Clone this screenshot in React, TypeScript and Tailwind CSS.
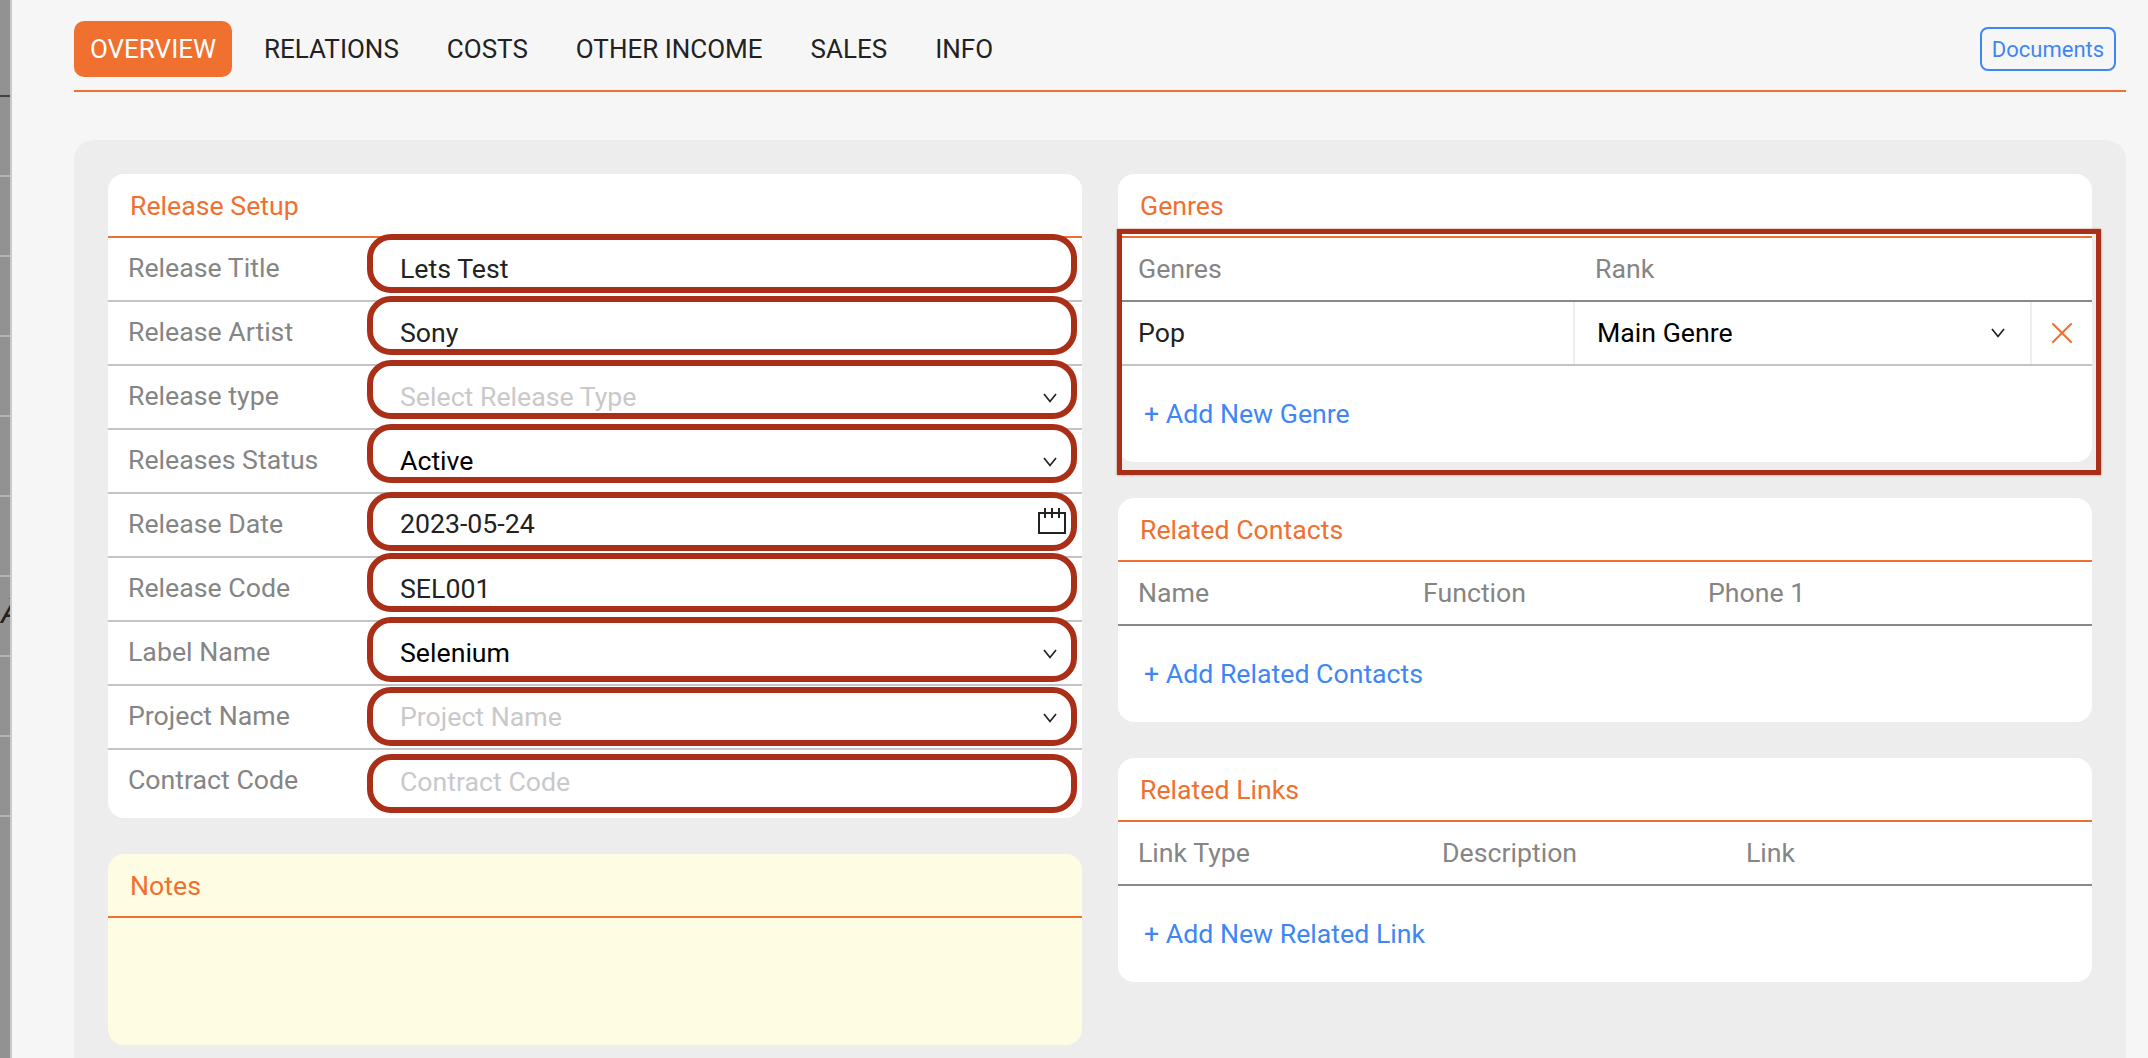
import React from 'react';
import { X } from 'lucide-react';

const tabs = ['RELATIONS', 'COSTS', 'OTHER INCOME', 'SALES', 'INFO'];

interface SetupRow {
  label: string;
  value?: string;
  placeholder?: string;
  ring: string;
  text: string;
  select?: boolean;
  date?: boolean;
}

// the red outlines are hand-drawn annotations, each sits a bit differently on its row
const setupRows: SetupRow[] = [
  { label: 'Release Title', value: 'Lets Test', ring: 'top-[-4px] h-[59px]', text: 'text-[#222] pt-[1px]' },
  { label: 'Release Artist', value: 'Sony', ring: 'top-[-6px] h-[59px]', text: 'text-[#222] pt-[1px]' },
  { label: 'Release type', placeholder: 'Select Release Type', ring: 'top-[-6px] h-[59px]', text: 'text-[#c9c9c9] pt-[1px]', select: true },
  { label: 'Releases Status', value: 'Active', ring: 'top-[-6px] h-[59px]', text: 'text-black pt-[1px]', select: true },
  { label: 'Release Date', value: '2023-05-24', ring: 'top-[-2px] h-[59px]', text: 'text-[#222] pb-[1px]', date: true },
  { label: 'Release Code', value: 'SEL001', ring: 'top-[-5px] h-[59px]', text: 'text-[#222] pt-[1px]' },
  { label: 'Label Name', value: 'Selenium', ring: 'top-[-5px] h-[65px]', text: 'text-black pt-[1px]', select: true },
  { label: 'Project Name', placeholder: 'Project Name', ring: 'top-[1px] h-[59px]', text: 'text-[#c9c9c9] pt-[1px]', select: true },
  { label: 'Contract Code', placeholder: 'Contract Code', ring: 'top-[4px] h-[59px]', text: 'text-[#c9c9c9] pb-[4px]' },
];

const CalendarIcon = () => (
  <svg width="28" height="26" viewBox="0 0 28 26" fill="none" stroke="#222" strokeWidth="2">
    <rect x="1" y="5" width="26" height="20" />
    <path d="M7 0v10M14 0v10M21 0v10" />
  </svg>
);

const Chevron = () => (
  <svg width="14" height="10" viewBox="0 0 14 10" fill="none" stroke="#222" strokeWidth="1.7">
    <path d="M1 1l6 7.5L13 1" />
  </svg>
);

const CardTitle = ({ children }: { children: string }) => (
  <div className="h-[64px] flex items-center pl-[22px] pt-[2px] border-b-2 border-[#f07030] text-[26.7px] text-[#f07030]">
    {children}
  </div>
);

const AddLink = ({ children }: { children: string }) => (
  <div className="h-[96px] flex items-center pl-[26px] text-[26.7px] text-[#3f86f5]">{children}</div>
);

const RelatedCard = ({
  title,
  cols,
  grid,
  add,
}: {
  title: string;
  cols: string[];
  grid: string;
  add: string;
}) => (
  <div className="bg-white rounded-[16px]">
    <CardTitle>{title}</CardTitle>
    <div className={`h-[64px] grid items-center ${grid} pl-[20px] border-b-2 border-[#888] text-[26.7px] text-[#858585]`}>
      {cols.map((c) => (
        <div key={c}>{c}</div>
      ))}
    </div>
    <AddLink>{add}</AddLink>
  </div>
);

export default function App() {
  return (
    <div className="flex h-[1058px] overflow-hidden bg-[#f6f6f6] font-['Roboto',sans-serif]">
      <div className="relative w-[12px] shrink-0 bg-[#929292] border-r-2 border-[#c8c8c8] overflow-hidden">
        <div className="h-[97px] border-b-2 border-[#444]" />
        {[0, 1, 2, 3, 4, 5, 6, 7, 8].map((i) => (
          <div key={i} className="h-[80px] border-b-2 border-[#b4b4b4]" />
        ))}
        <span className="absolute left-[1px] top-[594px] text-[32px] leading-[36px] italic text-[#222]">Â</span>
      </div>

      <div className="flex-1 min-w-0 pl-[62px] pr-[22px]">
        <div className="h-[92px] border-b-2 border-[#f07030] flex items-start pt-[21px] text-[26px] text-[#222]">
          <div className="h-[56px] w-[158px] flex items-center justify-center rounded-[10px] bg-[#f07030] text-white">
            OVERVIEW
          </div>
          <div className="h-[56px] flex items-center gap-[48px] ml-[32px]">
            {tabs.map((t) => (
              <div key={t}>{t}</div>
            ))}
          </div>
          <div className="ml-auto mr-[10px] mt-[6px] h-[44px] w-[136px] flex items-center justify-center rounded-[8px] border-2 border-[#3f86f5] text-[22px] text-[#3f86f5]">
            Documents
          </div>
        </div>

        <div className="mt-[48px] h-[960px] rounded-t-[20px] bg-[#ededed] px-[34px] pt-[34px] flex gap-[36px]">
          <div className="w-[974px] shrink-0">
            <div className="bg-white rounded-[16px]">
              <CardTitle>Release Setup</CardTitle>
              {setupRows.map((row, idx) => {
                const last = idx === setupRows.length - 1;
                return (
                  <div
                    key={row.label}
                    className={`flex items-stretch text-[26.7px] ${last ? 'h-[68px]' : 'h-[64px] border-b-2 border-[#c4c4c4]'}`}
                  >
                    <div className={`w-[259px] shrink-0 pl-[20px] flex items-center text-[#858585] ${last ? 'pb-[8px]' : 'pb-[2px]'}`}>
                      {row.label}
                    </div>
                    <div className={`relative flex-1 flex items-center pl-[33px] pr-[25px] ${row.text}`}>
                      <span>{row.value ?? row.placeholder}</span>
                      {row.select && (
                        <span className="ml-auto">
                          <Chevron />
                        </span>
                      )}
                      {row.date && (
                        <span className="ml-auto mr-[-9px] mb-[8px]">
                          <CalendarIcon />
                        </span>
                      )}
                      <div className={`absolute left-0 right-[5px] ${row.ring} rounded-[24px] border-[6px] border-[#a92f18] pointer-events-none`} />
                    </div>
                  </div>
                );
              })}
            </div>

            <div className="mt-[36px] h-[191px] bg-[#fefce3] rounded-[16px]">
              <CardTitle>Notes</CardTitle>
            </div>
          </div>

          <div className="flex-1 min-w-0 flex flex-col gap-[36px]">
            <div className="relative bg-white rounded-[16px]">
              <CardTitle>Genres</CardTitle>
              <div className="h-[64px] flex items-center border-b-2 border-[#888] text-[26.7px] text-[#858585]">
                <div className="w-[477px] pl-[20px]">Genres</div>
                <div>Rank</div>
              </div>
              <div className="h-[64px] flex border-b-2 border-[#c4c4c4] text-[26.7px]">
                <div className="w-[457px] pl-[20px] flex items-center text-[#222] border-r-2 border-[#eee]">Pop</div>
                <div className="w-[457px] pl-[22px] pr-[25px] flex items-center justify-between text-black border-r-2 border-[#eee]">
                  Main Genre
                  <Chevron />
                </div>
                <div className="flex-1 flex items-center justify-center">
                  <X size={36} strokeWidth={1.4} className="text-[#f07030]" />
                </div>
              </div>
              <AddLink>+ Add New Genre</AddLink>
              <div className="absolute left-[-1px] right-[-9px] top-[55px] bottom-[-13px] border-[5px] border-[#a92f18] shadow-[0_0_2px_rgba(169,47,24,0.6)] pointer-events-none" />
            </div>

            <RelatedCard
              title="Related Contacts"
              cols={['Name', 'Function', 'Phone 1']}
              grid="grid-cols-[285px_285px_1fr]"
              add="+ Add Related Contacts"
            />
            <RelatedCard
              title="Related Links"
              cols={['Link Type', 'Description', 'Link']}
              grid="grid-cols-[304px_304px_1fr]"
              add="+ Add New Related Link"
            />
          </div>
        </div>
      </div>
    </div>
  );
}
